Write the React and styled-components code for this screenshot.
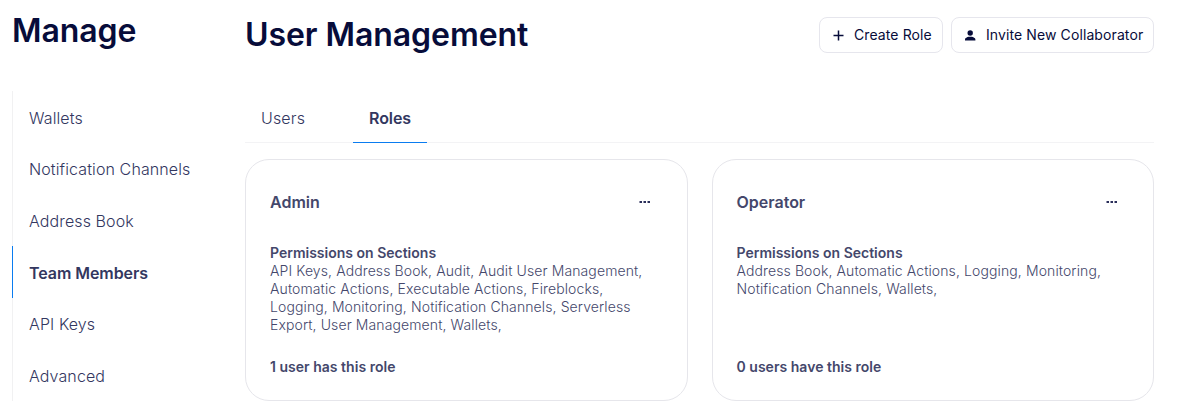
import React from "react";
import styled, { createGlobalStyle } from "styled-components";

const GlobalStyle = createGlobalStyle`
  *, *::before, *::after { box-sizing: border-box; }
  body {
    margin: 0;
    background: #fff;
    font-family: Inter, "Liberation Sans", sans-serif;
    color: #44476b;
  }
  h1, h2, h3, p { margin: 0; }
  button { font: inherit; background: none; border: 0; padding: 0; cursor: pointer; }
`;

const Page = styled.div`
  display: grid;
  grid-template-columns: 233px 909px;
  width: 1180px;
  height: 420px;
  padding-left: 12px;
  overflow: hidden;
`;

const Title = styled.h1`
  font-size: 32px;
  line-height: 40px;
  font-weight: 600;
  letter-spacing: -0.06px;
  color: #070c3a;
  white-space: nowrap;
`;

const Sidebar = styled.aside`
  padding-top: 11px;
`;

const Nav = styled.nav`
  display: flex;
  flex-direction: column;
  height: 310px;
  margin-top: 40px;
`;

const NavItem = styled.a`
  display: flex;
  flex: 1;
  align-items: center;
  padding: 1.7px 0 0 16px;
  border-left: 1px solid ${(p) => (p.$active ? "#0a7cf0" : "#f1f1f2")};
  font-size: 16px;
  font-weight: ${(p) => (p.$active ? 600 : 300)};
  letter-spacing: ${(p) => (p.$active ? "-0.06px" : "0.11px")};
  color: #33375f;
`;

const Main = styled.main`
  padding-top: 15px;
`;

const Header = styled.header`
  display: flex;
  justify-content: space-between;
  height: 40px;
`;

const Actions = styled.div`
  display: flex;
  gap: 8px;
  padding-top: 2px;
`;

const ActionButton = styled.button`
  && {
    display: flex;
    align-items: center;
    gap: 9px;
    width: ${(p) => p.$width};
    height: 36px;
    padding: 0 0 1px 12px;
    border: 1px solid #e6e6ed;
    border-radius: 8px;
    font-size: 14px;
    font-weight: 400;
    letter-spacing: 0.1px;
    color: #070c3a;
    white-space: nowrap;
  }
`;

const Tabs = styled.div`
  display: flex;
  gap: 32px;
  height: 48px;
  margin-top: 40px;
  box-shadow: inset 0 -1px #f3f3f5;
`;

const Tab = styled.button`
  && {
    padding: 0 16px 2px;
    border-bottom: 1px solid ${(p) => (p.$active ? "#0a7cf0" : "transparent")};
    font-size: 16px;
    font-weight: ${(p) => (p.$active ? 600 : 300)};
    letter-spacing: ${(p) => (p.$active ? "-0.1px" : "0.15px")};
    color: #33375f;
  }
`;

const Cards = styled.section`
  display: grid;
  grid-template-columns: repeat(2, 1fr);
  gap: 24px;
  margin-top: 16px;
`;

const Card = styled.article`
  display: flex;
  flex-direction: column;
  height: 242px;
  padding: 32px 24px 24px;
  border: 1px solid #e6e6eb;
  border-radius: 24px;
`;

const CardHeader = styled.div`
  display: flex;
  justify-content: space-between;
  padding-right: 11.5px;
`;

const RoleName = styled.h2`
  font-size: 16px;
  line-height: 20px;
  font-weight: 600;
`;

const MoreButton = styled.button`
  display: flex;
  align-items: center;
  height: 20px;
`;

const Permissions = styled.div`
  margin-top: 32px;
  font-size: 14px;
  line-height: 18px;
`;

const Label = styled.h3`
  font-size: 14px;
  line-height: 18px;
  font-weight: 600;
`;

const Sections = styled.p`
  width: 382px;
  font-weight: 300;
  letter-spacing: 0.11px;
`;

const UserCount = styled.p`
  margin-top: auto;
  font-size: 14px;
  line-height: 18px;
  font-weight: 600;
  letter-spacing: 0.02px;
`;

const PlusIcon = () => (
  <svg width="13" height="14" viewBox="0 0 13 14" fill="none" stroke="#070c3a" strokeWidth="1.5">
    <path d="M6.5 2.5v10M1.5 7.5h10" />
  </svg>
);

const PersonIcon = () => (
  <svg width="13" height="14" viewBox="0 0 13 14" fill="#070c3a">
    <circle cx="6.2" cy="5" r="2.7" />
    <path d="M1 12.5v-1.1C1 9.9 3.3 9.2 4.6 8.8h3.2c1.3.4 3.6 1.1 3.6 2.6v1.1z" />
  </svg>
);

const DotsIcon = () => (
  <svg width="12" height="4" viewBox="0 0 12 4" fill="#2a2e5a">
    <rect x="0.5" y="1" width="2.5" height="2" />
    <rect x="4.5" y="1" width="2.5" height="2" />
    <rect x="8.5" y="1" width="2.5" height="2" />
  </svg>
);

const navItems = ["Wallets", "Notification Channels", "Address Book", "Team Members", "API Keys", "Advanced"];

const roles = [
  {
    name: "Admin",
    sections:
      "API Keys, Address Book, Audit, Audit User Management, Automatic Actions, Executable Actions, Fireblocks, Logging, Monitoring, Notification Channels, Serverless Export, User Management, Wallets,",
    users: "1 user has this role",
  },
  {
    name: "Operator",
    sections: "Address Book, Automatic Actions, Logging, Monitoring, Notification Channels, Wallets,",
    users: "0 users have this role",
  },
];

export default function App() {
  return (
    <>
      <GlobalStyle />
      <Page>
        <Sidebar>
          <Title>Manage</Title>
          <Nav>
            {navItems.map((item) => (
              <NavItem key={item} $active={item === "Team Members"}>
                {item}
              </NavItem>
            ))}
          </Nav>
        </Sidebar>
        <Main>
          <Header>
            <Title>User Management</Title>
            <Actions>
              <ActionButton $width="124px">
                <PlusIcon />
                Create Role
              </ActionButton>
              <ActionButton $width="203px">
                <PersonIcon />
                Invite New Collaborator
              </ActionButton>
            </Actions>
          </Header>
          <Tabs>
            <Tab>Users</Tab>
            <Tab $active>Roles</Tab>
          </Tabs>
          <Cards>
            {roles.map((role) => (
              <Card key={role.name}>
                <CardHeader>
                  <RoleName>{role.name}</RoleName>
                  <MoreButton aria-label="More">
                    <DotsIcon />
                  </MoreButton>
                </CardHeader>
                <Permissions>
                  <Label>Permissions on Sections</Label>
                  <Sections>{role.sections}</Sections>
                </Permissions>
                <UserCount>{role.users}</UserCount>
              </Card>
            ))}
          </Cards>
        </Main>
      </Page>
    </>
  );
}
